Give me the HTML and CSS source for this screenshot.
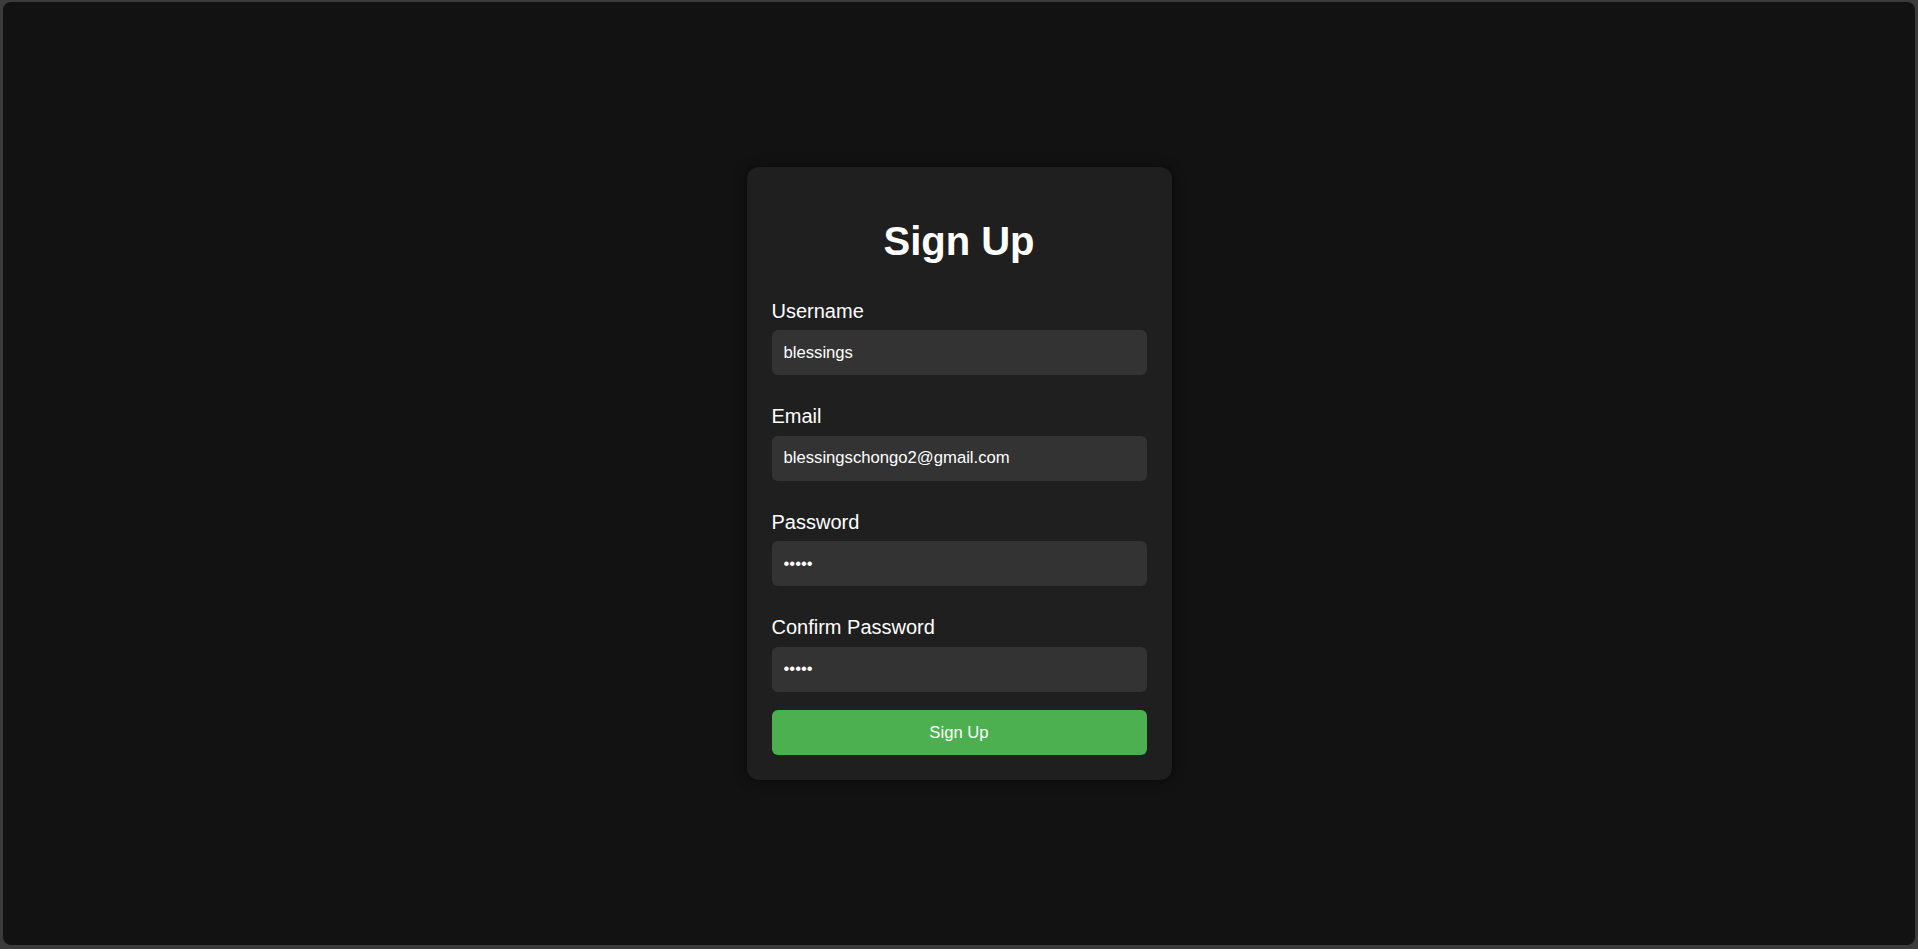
FILE: index.html
```html
<!DOCTYPE html>
<html lang="en">
<head>
<meta charset="utf-8">
<title>Sign Up</title>
<link rel="stylesheet" href="styles.css">
</head>
<body>
<div class="frame">
  <div class="card">
    <h1 class="title">Sign Up</h1>
    <form class="form">
      <div class="group">
        <label class="label" for="u">Username</label>
        <input class="input" id="u" type="text" value="blessings">
      </div>
      <div class="group">
        <label class="label" for="e">Email</label>
        <input class="input" id="e" type="email" value="blessingschongo2@gmail.com">
      </div>
      <div class="group">
        <label class="label" for="p">Password</label>
        <input class="input" id="p" type="password" value="12345">
      </div>
      <div class="group last">
        <label class="label" for="c">Confirm Password</label>
        <input class="input" id="c" type="password" value="12345">
      </div>
      <button class="button" type="button">Sign Up</button>
    </form>
  </div>
</div>
</body>
</html>
```
FILE: styles.css
```css
* { box-sizing: border-box; }
html, body { margin: 0; padding: 0; height: 100%; }
body {
  background: #3b3b3b;
  font-family: "Liberation Sans", Arial, sans-serif;
  padding: 2px 3px 4px 3px;
}
.frame {
  height: 100%;
  background: #121212;
  border-radius: 8px;
  display: flex;
  align-items: center;
  justify-content: center;
}
.card {
  width: 425px;
  background: #1f1f1f;
  border-radius: 12px;
  padding: 51px 25px 25px 25px;
  box-shadow: 0 0 12px rgba(0,0,0,0.5);
  color: #ffffff;
}
.title {
  margin: 0 0 36px 0;
  font-size: 40px;
  line-height: 46px;
  font-weight: bold;
  text-align: center;
}
.form { display: flex; flex-direction: column; }
.group { margin-bottom: 30px; }
.group.last { margin-bottom: 18.5px; }
.label {
  display: block;
  font-size: 20px;
  line-height: 23px;
  margin-bottom: 7.5px;
  color: #ffffff;
}
.input {
  display: block;
  width: 100%;
  height: 45px;
  padding: 0 12px;
  border: none;
  border-radius: 6px;
  background: #333333;
  color: #ffffff;
  font-family: "Liberation Sans", Arial, sans-serif;
  font-size: 16.67px;
  outline: none;
}
.button {
  width: 100%;
  height: 45px;
  border: none;
  border-radius: 6px;
  background: #4caf50;
  color: #ffffff;
  font-family: "Liberation Sans", Arial, sans-serif;
  font-size: 16.67px;
  cursor: pointer;
}
```
